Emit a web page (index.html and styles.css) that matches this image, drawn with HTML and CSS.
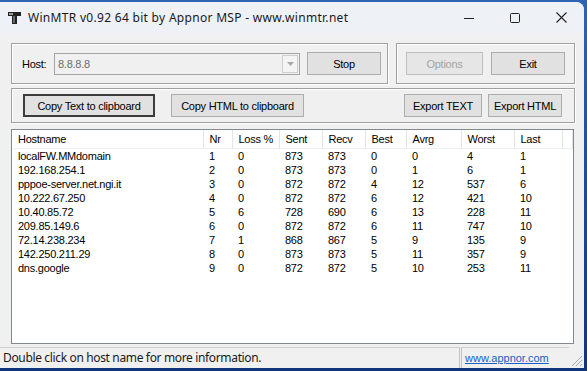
FILE: index.html
```html
<!DOCTYPE html>
<html lang="en">
<head>
    <meta charset="UTF-8">
    <title>WinMTR v0.92 64 bit by Appnor MSP - www.winmtr.net</title>
    <link rel="stylesheet" href="styles.css">
</head>
<body>
    <div class="window">
        <div class="titlebar">
            <svg class="app-icon" width="13" height="12" viewBox="0 0 13 12">
                <rect x="0" y="0" width="13" height="4" fill="#222"/>
                <rect x="1" y="1" width="4" height="2" fill="#9a9a9a"/>
                <rect x="4" y="4" width="5" height="8" fill="#222"/>
                <rect x="5" y="4" width="2" height="7" fill="#666"/>
            </svg>
            <span class="title">WinMTR v0.92 64 bit by Appnor MSP - www.winmtr.net</span>
            <div class="caption-buttons">
                <div class="caption-btn">
                    <svg width="10" height="10" viewBox="0 0 10 10"><path d="M0 5.5h10" stroke="#222" stroke-width="1"/></svg>
                </div>
                <div class="caption-btn">
                    <svg width="10" height="10" viewBox="0 0 10 10"><rect x="0.5" y="0.5" width="9" height="9" rx="1" fill="none" stroke="#222" stroke-width="1"/></svg>
                </div>
                <div class="caption-btn">
                    <svg width="11" height="11" viewBox="0 0 11 11"><path d="M0.5 0.5l10 10M10.5 0.5l-10 10" stroke="#222" stroke-width="1.1"/></svg>
                </div>
            </div>
        </div>

        <div class="client">
            <div class="row">
                <div class="group group-host">
                    <span class="label">Host:</span>
                    <div class="combo">
                        <span class="combo-text">8.8.8.8</span>
                        <span class="combo-arrow">
                            <svg width="7" height="4" viewBox="0 0 7 4"><path d="M0 0h7L3.5 4z" fill="#a8a8a8"/></svg>
                        </span>
                    </div>
                    <button class="btn btn-stop">Stop</button>
                </div>
                <div class="group group-actions">
                    <button class="btn btn-options" disabled>Options</button>
                    <button class="btn btn-exit">Exit</button>
                </div>
            </div>

            <div class="group group-export">
                <button class="btn btn-default btn-copy-text">Copy Text to clipboard</button>
                <button class="btn btn-copy-html">Copy HTML to clipboard</button>
                <button class="btn btn-export-text">Export TEXT</button>
                <button class="btn btn-export-html">Export HTML</button>
            </div>

            <div class="list">
                <table class="hops">
                    <colgroup>
                        <col style="width:191px"><col style="width:29px"><col style="width:47px">
                        <col style="width:43px"><col style="width:43px"><col style="width:41px">
                        <col style="width:55px"><col style="width:53px"><col style="width:48px">
                        <col>
                    </colgroup>
                    <thead>
                        <tr>
                            <th>Hostname</th><th>Nr</th><th>Loss %</th><th>Sent</th><th>Recv</th>
                            <th>Best</th><th>Avrg</th><th>Worst</th><th>Last</th><th></th>
                        </tr>
                    </thead>
                    <tbody id="hops-body"></tbody>
                </table>
            </div>
        </div>

        <div class="statusbar">
            <div class="status-main">Double click on host name for more information.</div>
            <div class="status-link"><a href="#">www.appnor.com</a></div>
            <svg class="grip" width="14" height="14" viewBox="0 0 14 14">
                <path d="M13 3L3 13M13 7L7 13M13 11L11 13" stroke="#a9a9a9" stroke-width="1"/>
            </svg>
        </div>
    </div>

    <script>
        // hostname, nr, loss, sent, recv, best, avrg, worst, last
        const hops = [
            ['localFW.MMdomain', 1, 0, 873, 873, 0, 0, 4, 1],
            ['192.168.254.1', 2, 0, 873, 873, 0, 1, 6, 1],
            ['pppoe-server.net.ngi.it', 3, 0, 872, 872, 4, 12, 537, 6],
            ['10.222.67.250', 4, 0, 872, 872, 6, 12, 421, 10],
            ['10.40.85.72', 5, 6, 728, 690, 6, 13, 228, 11],
            ['209.85.149.6', 6, 0, 872, 872, 6, 11, 747, 10],
            ['72.14.238.234', 7, 1, 868, 867, 5, 9, 135, 9],
            ['142.250.211.29', 8, 0, 873, 873, 5, 11, 357, 9],
            ['dns.google', 9, 0, 872, 872, 5, 10, 253, 11]
        ];

        document.getElementById('hops-body').innerHTML = hops.map(hop =>
            '<tr>' + hop.map(v => `<td>${v}</td>`).join('') + '<td></td></tr>'
        ).join('');
    </script>
</body>
</html>
```

FILE: styles.css
```css
body {
    margin: 0;
    width: 587px;
    height: 371px;
    overflow: hidden;
    background: linear-gradient(180deg, #2f63b4 0%, #1b4b9e 50%, #10357d 100%);
    font-family: 'Liberation Sans', Arial, sans-serif;
}
.window {
    margin-top: 2px;
    width: 584px;
    height: 366px;
    background: #f0f0f0;
    border-radius: 0 8px 0 0;
    display: flex;
    flex-direction: column;
    overflow: hidden;
}
.titlebar {
    height: 31px;
    flex: none;
    background: #eef1f6;
    display: flex;
    align-items: center;
}
.app-icon {
    margin: 0 7px 0 8px;
}
.title {
    font-family: 'Noto Sans', 'Open Sans', sans-serif;
    font-size: 12px;
    color: #1a1a1a;
    letter-spacing: 0.3px;
}
.caption-buttons {
    margin-left: auto;
    display: flex;
    height: 100%;
}
.caption-btn {
    width: 46px;
    display: flex;
    align-items: center;
    justify-content: center;
}

.client {
    padding: 10px 0 0 11px;
    font-size: 11px;
    letter-spacing: -0.25px;
    color: #000;
}
.row {
    display: flex;
    gap: 8px;
}
.group {
    box-sizing: border-box;
    border: 1px solid #a0a0a0;
    box-shadow: inset 1px 1px 0 #fff, 1px 1px 0 #fff;
    display: flex;
    align-items: center;
}
.group-host {
    width: 377px;
    height: 41px;
    padding-left: 10px;
}
.label {
    width: 32px;
}
.combo {
    box-sizing: border-box;
    width: 246px;
    height: 22px;
    border: 1px solid #a5a5a5;
    background: #f0f0f0;
    display: flex;
    align-items: center;
}
.combo-text {
    flex: 1;
    padding-left: 3px;
    color: #6d6d6d;
}
.combo-arrow {
    box-sizing: border-box;
    width: 16px;
    height: 18px;
    margin-right: 1px;
    border: 1px solid #cfcfcf;
    background: #f4f4f4;
    display: flex;
    align-items: center;
    justify-content: center;
}
.btn {
    box-sizing: border-box;
    height: 23px;
    padding: 0;
    border: 1px solid #adadad;
    background: #e1e1e1;
    font-family: inherit;
    font-size: 11px;
    letter-spacing: -0.25px;
    color: #000;
}
.btn:disabled {
    color: #a3a3a3;
    border-color: #bfbfbf;
    background: #e6e6e6;
}
.btn-default {
    border: 2px solid #3c3c3c;
}
.btn-stop {
    width: 74px;
    margin-left: 7px;
}
.group-actions {
    width: 179px;
    height: 41px;
    padding-left: 9px;
    gap: 8px;
}
.btn-options {
    width: 77px;
}
.btn-exit {
    width: 74px;
}
.group-export {
    margin-top: 4px;
    width: 564px;
    height: 35px;
    padding-left: 11px;
}
.btn-copy-text {
    width: 132px;
}
.btn-copy-html {
    width: 133px;
    margin-left: 16px;
}
.btn-export-text {
    width: 78px;
    margin-left: auto;
}
.btn-export-html {
    width: 74px;
    margin: 0 12px 0 6px;
}

.list {
    box-sizing: border-box;
    margin-top: 6px;
    width: 563px;
    height: 215px;
    border: 1px solid #828790;
    background: #fff;
    overflow: hidden;
}
.hops {
    width: 561px;
    table-layout: fixed;
    border-collapse: collapse;
}
.hops th {
    height: 18px;
    padding: 0 0 0 6px;
    border-right: 1px solid #e5e5e5;
    font-weight: normal;
    text-align: left;
    white-space: nowrap;
    overflow: hidden;
}
.hops td {
    height: 14px;
    padding: 0 0 0 6px;
    line-height: 14px;
    white-space: nowrap;
    overflow: hidden;
}
.hops thead tr {
    border-bottom: 1px solid #f0f0f0;
}

.statusbar {
    margin-top: auto;
    height: 21px;
    flex: none;
    display: flex;
    align-items: stretch;
    position: relative;
}
.status-main {
    width: 456px;
    padding-left: 3px;
    border-top: 1px solid #d0d0d0;
    border-right: 1px solid #c2c2c2;
    font-family: 'Noto Sans', 'Open Sans', sans-serif;
    font-size: 12px;
    letter-spacing: -0.35px;
    line-height: 20px;
    color: #1a1a1a;
}
.status-link {
    width: 104px;
    margin-left: 1px;
    padding-left: 3px;
    border-top: 1px solid #d0d0d0;
    border-left: 1px solid #c2c2c2;
    font-size: 11px;
    line-height: 21px;
}
.status-link a {
    color: #1a5fc4;
}
.grip {
    position: absolute;
    right: 1px;
    bottom: 1px;
}
```
